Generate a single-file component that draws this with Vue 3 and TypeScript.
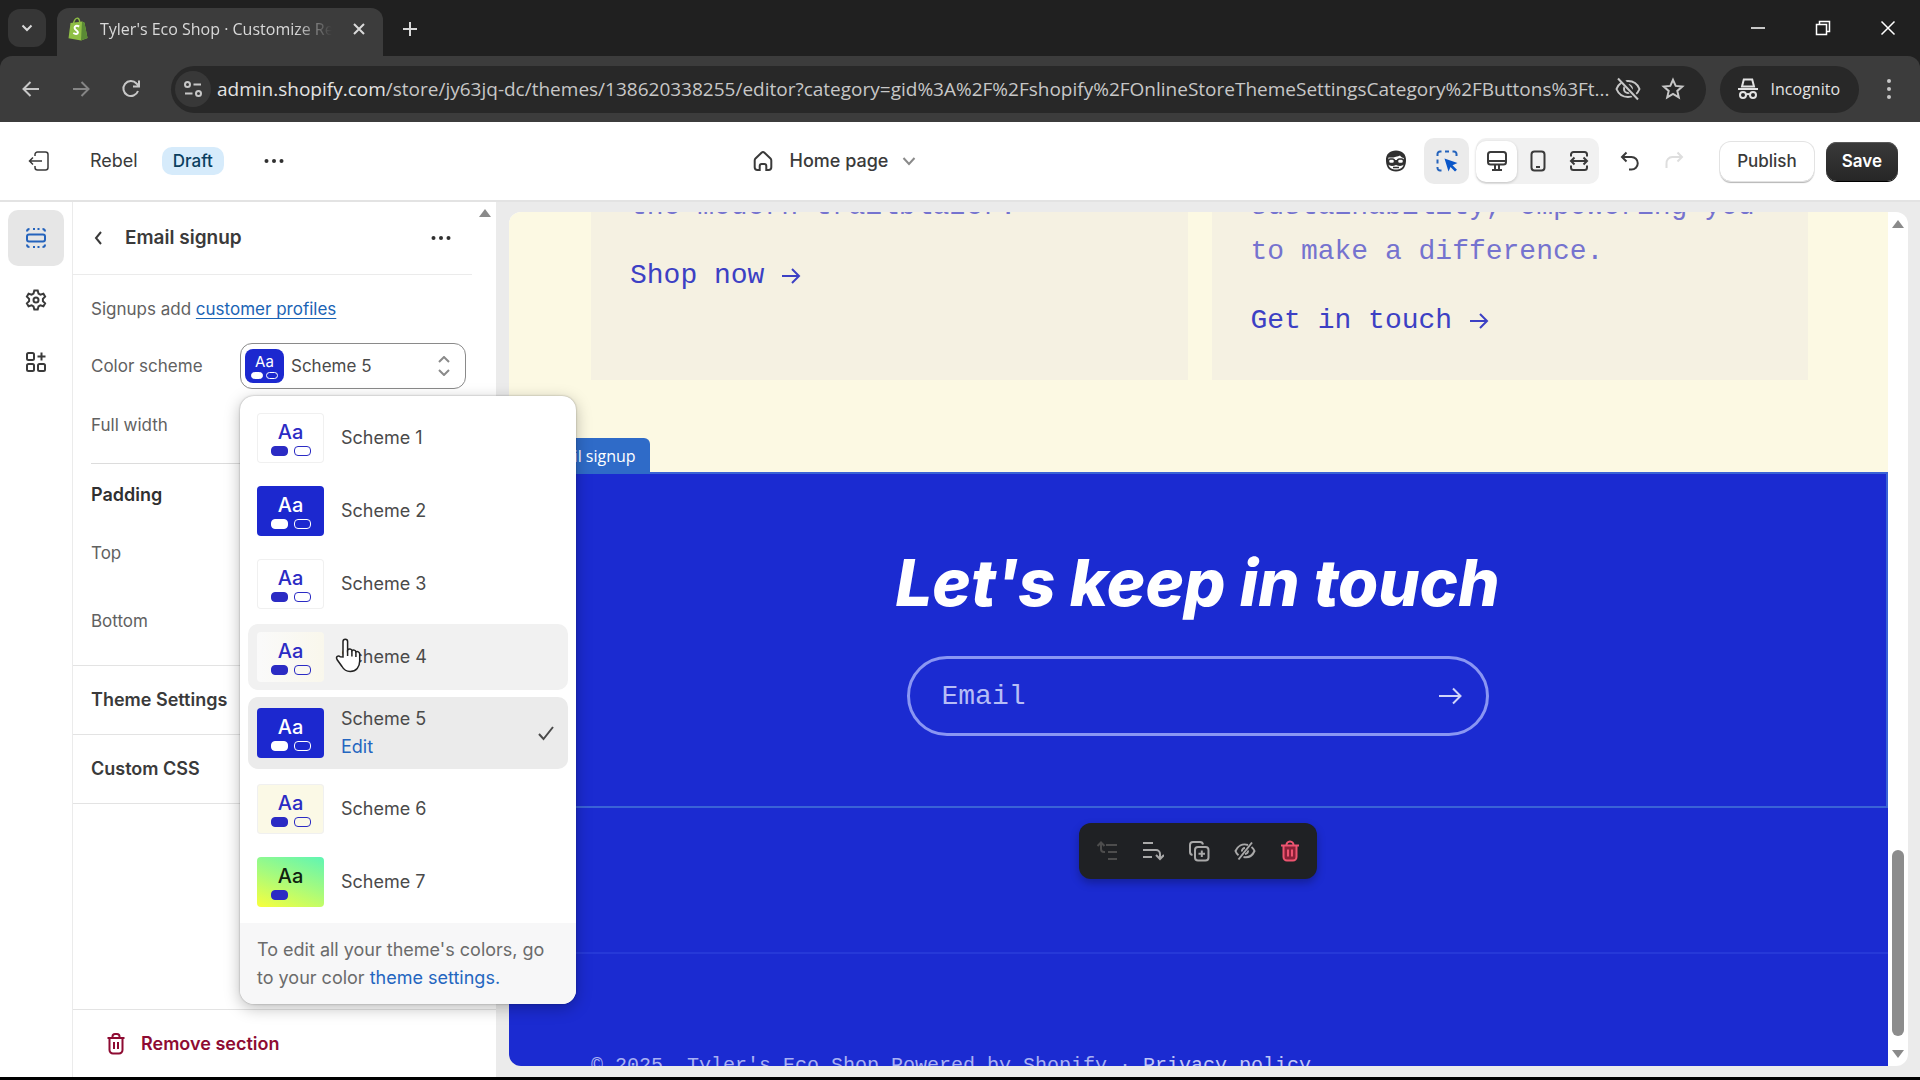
<script setup lang="ts">
import { ref } from 'vue'

interface Scheme {
  name: string
  tone: string
}

const schemes: Scheme[] = [
  { name: 'Scheme 1', tone: 'light' },
  { name: 'Scheme 2', tone: 'blue' },
  { name: 'Scheme 3', tone: 'light' },
  { name: 'Scheme 4', tone: 'ivory' },
  { name: 'Scheme 5', tone: 'blue' },
  { name: 'Scheme 6', tone: 'cream' },
  { name: 'Scheme 7', tone: 'lime' },
]

const selected = ref('Scheme 5')
const hovered = ref('Scheme 4')
const email = ref('')
</script>

<template>
  <div class="window">
    <header class="tabs">
      <button class="tab-search" aria-label="Search tabs">
        <svg width="14" height="14" viewBox="0 0 14 14"><path d="M2.500 4.500 7 9l4.500-4.500" class="ln w2" /></svg>
      </button>
      <div class="tab">
        <svg class="favicon" width="20" height="24" viewBox="0 0 20 24">
          <path d="M2.500 6 14 4.500l2.500 1.300L19.500 21 13 23.500 0.500 21.300z" fill="#8fbf45" />
          <path d="M14 4.500l2.500 1.300L19.500 21 13 23.500z" fill="#5a8a35" />
          <path d="M5.500 6.500C6 3 8 .8 9.700 1.200c1.500.4 2 2.500 2 4.500" fill="none" stroke="#8fbf45" stroke-width="1.400" />
          <path d="M11.200 9.500c-2.700-1.400-4.700-.3-4.600 1.500.1 2.200 3.400 2.300 3.300 4.400-.1 1.800-2.600 2-4.600.6" fill="none" stroke="#fff" stroke-width="2" />
        </svg>
        <span class="tab-title">Tyler's Eco Shop · Customize Rebel</span>
        <button class="tab-close" aria-label="Close tab">
          <svg width="14" height="14" viewBox="0 0 14 14"><path d="M2 2l10 10M12 2 2 12" class="ln w2" /></svg>
        </button>
      </div>
      <button class="tab-new" aria-label="New tab">
        <svg width="16" height="16" viewBox="0 0 16 16"><path d="M8 1v14M1 8h14" class="ln w2" /></svg>
      </button>
      <div class="win-controls">
        <button aria-label="Minimize"><svg width="16" height="16" viewBox="0 0 16 16"><path d="M1 8h14" class="ln" /></svg></button>
        <button aria-label="Restore"><svg width="16" height="16" viewBox="0 0 16 16"><path d="M1.500 4.500h10v10h-10zM4.500 4.500v-3h10v10h-3" class="ln" /></svg></button>
        <button aria-label="Close"><svg width="16" height="16" viewBox="0 0 16 16"><path d="M1.500 1.500l13 13M14.500 1.500l-13 13" class="ln" /></svg></button>
      </div>
    </header>

    <nav class="toolbar">
      <button class="nav-btn" aria-label="Back"><svg width="20" height="20" viewBox="0 0 20 20"><path d="M18 10H3M9.500 3 2.500 10l7 7" class="ln w2" /></svg></button>
      <button class="nav-btn dim" aria-label="Forward"><svg width="20" height="20" viewBox="0 0 20 20"><path d="M2 10h15M10.500 3l7 7-7 7" class="ln w2" /></svg></button>
      <button class="nav-btn" aria-label="Reload"><svg width="20" height="20" viewBox="0 0 20 20"><path d="M17 12a7.500 7.500 0 1 1-1.500-7.500L17.500 6.500M18 1.500v6h-6" class="ln w2" /></svg></button>
      <div class="omnibox">
        <button class="site-info" aria-label="Site information">
          <svg width="20" height="20" viewBox="0 0 20 20"><circle cx="4.500" cy="5.500" r="2.500" class="ln w2" /><path d="M10.500 5.500H18M2 14.500h7.500" class="ln w2" /><circle cx="15.500" cy="14.500" r="2.500" class="ln w2" /></svg>
        </button>
        <span class="url"><b>admin.shopify.com</b>/store/jy63jq-dc/themes/138620338255/editor?category=gid%3A%2F%2Fshopify%2FOnlineStoreThemeSettingsCategory%2FButtons%3Ft...</span>
        <button class="omni-btn" aria-label="Third-party cookies blocked">
          <svg width="26" height="24" viewBox="0 0 26 24"><path d="M1.500 12C3.500 7 8 4 13 4s9.500 3 11.500 8c-2 5-6.500 8-11.500 8S3.500 17 1.500 12z" class="ln w2" /><circle cx="13" cy="12" r="4" class="ln w2" /><path d="M5.500 1l17 21.500" stroke="#282828" stroke-width="5" /><path d="M3 1.500l20 21" class="ln w2" /></svg>
        </button>
        <button class="omni-btn" aria-label="Bookmark this tab">
          <svg width="24" height="24" viewBox="0 0 24 24"><path d="M12 2.800l2.700 6.100 6.600.6-5 4.400 1.500 6.500-5.800-3.400-5.800 3.400 1.500-6.500-5-4.400 6.600-.6z" class="ln w2" /></svg>
        </button>
      </div>
      <button class="incognito">
        <svg width="22" height="22" viewBox="0 0 22 22"><path d="M5 8.500 6.800 1.500h8.400L17 8.500zM1 11h20" class="ln w2" /><circle cx="6" cy="17" r="3" class="ln w2" /><circle cx="16" cy="17" r="3" class="ln w2" /><path d="M9 16.500q2-1 4 0" class="ln w2" /></svg>
        Incognito
      </button>
      <button class="kebab" aria-label="Chrome menu"><svg width="6" height="22" viewBox="0 0 6 22" fill="#c7c7c7"><circle cx="3" cy="3" r="2" /><circle cx="3" cy="11" r="2" /><circle cx="3" cy="19" r="2" /></svg></button>
    </nav>

    <section class="topbar">
      <div class="top-left">
        <button aria-label="Exit editor"><svg width="22" height="22" viewBox="0 0 22 22"><path d="M7 6V4.500A2.500 2.500 0 0 1 9.500 2h8A2.500 2.500 0 0 1 20 4.500v13a2.500 2.500 0 0 1-2.500 2.500h-8A2.500 2.500 0 0 1 7 17.500V16M14 11H1.500M5 7.500 1.500 11 5 14.500" class="ln" /></svg></button>
        <span class="theme-name">Rebel</span>
        <span class="badge">Draft</span>
        <button class="more" aria-label="Theme actions"><svg width="20" height="6" viewBox="0 0 20 6" fill="#303030"><circle cx="2.500" cy="3" r="2" /><circle cx="10" cy="3" r="2" /><circle cx="17.500" cy="3" r="2" /></svg></button>
      </div>
      <button class="page-picker">
        <svg width="22" height="22" viewBox="0 0 22 22"><path d="M9.500 2.700a2.200 2.200 0 0 1 3 0l6 5.800c.5.500.8 1.200.8 2v6.800a2.700 2.700 0 0 1-2.700 2.700h-2.300v-4a2 2 0 0 0-2-2h-2.600a2 2 0 0 0-2 2v4H5.400a2.700 2.700 0 0 1-2.700-2.700v-6.800c0-.8.3-1.500.8-2z" class="ln w2" /></svg>
        <span>Home page</span>
        <svg width="14" height="14" viewBox="0 0 14 14"><path d="M1.500 4l5.500 6 5.500-6" class="ln w2" stroke="#8a8a8a" /></svg>
      </button>
      <div class="top-right">
        <button class="sidekick" aria-label="Sidekick">
          <svg width="24" height="24" viewBox="0 0 24 24"><path d="M2 12C1.500 5 6 1.500 12 1.500S22.500 5 22 12c-.3 7-4 10.500-10 10.500S2.300 19 2 12z" fill="#303030" /><path d="M4.500 8.500c5 .5 9-1 11.500-2 1 1.500 2.300 2.300 3.800 2.500v2H4.300z" fill="#fff" /><path d="M4.500 15.500c1.500 2 5 1.500 7.500.5 2.500 1 6 1.500 7.500-.5-.5 3.500-3.500 5-7.500 5s-7-1.500-7.500-5z" fill="#fff" /><rect x="4.500" y="10" width="6" height="4.500" rx="2" fill="#fff" stroke="#303030" stroke-width="1.500" /><rect x="13.500" y="10" width="6" height="4.500" rx="2" fill="#fff" stroke="#303030" stroke-width="1.500" /><path d="M9 18.500h6" stroke="#303030" stroke-width="1.500" /></svg>
        </button>
        <button class="inspect" aria-label="Inspector">
          <svg width="24" height="24" viewBox="0 0 24 24"><path d="M2.500 7V5A2.500 2.500 0 0 1 5 2.500h1.500M10 2.500h4M17.500 2.500H19A2.500 2.500 0 0 1 21.500 5v2M2.500 10.500v4M2.500 18v1A2.500 2.500 0 0 0 5 21.500h1.500" class="ln w2" stroke="#2463bc" /><path d="M9.500 9.500l13 4.500-5 2.200 4.500 4.500-2 1.800-4.500-4.500-2 4.500z" fill="#0b57c9" /></svg>
        </button>
        <div class="devices">
          <button class="on" aria-label="Desktop"><svg width="22" height="22" viewBox="0 0 22 22"><rect x="2" y="2" width="18" height="12.500" rx="2.500" class="ln w2" /><path d="M2 11h18M9 15v4M13 15v4M6 20h10" class="ln w2" /></svg></button>
          <button aria-label="Mobile"><svg width="22" height="22" viewBox="0 0 22 22"><rect x="4.500" y="1.500" width="13" height="19" rx="3" class="ln w2" /><path d="M9 17h4" class="ln w2" /></svg></button>
          <button aria-label="Fullscreen"><svg width="22" height="22" viewBox="0 0 22 22"><path d="M3 6.500V4.500A2.500 2.500 0 0 1 5.500 2h11A2.500 2.500 0 0 1 19 4.500v2M3 15.500v2A2.500 2.500 0 0 0 5.500 20h11a2.500 2.500 0 0 0 2.500-2.500v-2M3 11h16M6.500 7.500 3 11l3.500 3.500M15.500 7.500 19 11l-3.500 3.500" class="ln w2" /></svg></button>
        </div>
        <div class="history">
          <button aria-label="Undo"><svg width="20" height="20" viewBox="0 0 20 20"><path d="M6.500 1.500 2 6l4.500 4.500M2 6h9.500a6 6 0 0 1 0 12.500H9" class="ln w2" /></svg></button>
          <button class="off" aria-label="Redo"><svg width="20" height="20" viewBox="0 0 20 20"><path d="M13.500 1.500 18 6l-4.500 4.500M18 6H8.500a6 6 0 0 0-6 7v4" class="ln w2" /></svg></button>
        </div>
        <button class="publish">Publish</button>
        <button class="save">Save</button>
      </div>
    </section>

    <main class="editor">
      <nav class="rail">
        <button class="on" aria-label="Sections"><svg width="22" height="22" viewBox="0 0 22 22"><rect x="2" y="7.500" width="18" height="7" rx="2" class="ln w2" /><path d="M2 4.500A2.500 2.500 0 0 1 4.500 2M8 2h2M12.500 2h2M17.500 2A2.500 2.500 0 0 1 20 4.500M2 17.500A2.500 2.500 0 0 0 4.500 20M8 20h2M12.500 20h2M17.500 20a2.500 2.500 0 0 0 2.500-2.500" class="ln w2" /></svg></button>
        <button aria-label="Theme settings"><svg width="24" height="24" viewBox="0 0 24 24"><path d="M10.300 2.500h3.400l.8 3 1.900 1.100 3-.9 1.700 2.900-2.200 2.200v2.400l2.200 2.200-1.700 2.900-3-.9-1.900 1.100-.8 3h-3.400l-.8-3-1.900-1.100-3 .9-1.700-2.900 2.200-2.200v-2.400L2.900 8.600l1.700-2.900 3 .9 1.900-1.100z" class="ln w2" /><circle cx="12" cy="12" r="2.500" class="ln w2" /></svg></button>
        <button aria-label="App embeds"><svg width="22" height="22" viewBox="0 0 22 22"><rect x="2" y="2" width="7" height="7" rx="1.500" class="ln w2" /><rect x="2" y="13" width="7" height="7" rx="1.500" class="ln w2" /><rect x="13" y="13" width="7" height="7" rx="1.500" class="ln w2" /><path d="M16.500 1.500v8M12.500 5.500h8" class="ln w2" /></svg></button>
      </nav>

      <aside class="panel">
        <svg class="panel-arrow" width="12" height="8" viewBox="0 0 12 8"><path d="M6 0l6 8H0z" fill="#8a8a8a" /></svg>
        <div class="panel-body">
          <div class="panel-head">
            <button aria-label="Back"><svg width="16" height="16" viewBox="0 0 16 16"><path d="M10 2 5 8l5 6" class="ln w2" /></svg></button>
            <h2>Email signup</h2>
            <button class="more" aria-label="Section actions"><svg width="20" height="6" viewBox="0 0 20 6" fill="#303030"><circle cx="2.500" cy="3" r="2" /><circle cx="10" cy="3" r="2" /><circle cx="17.500" cy="3" r="2" /></svg></button>
          </div>
          <div class="settings">
            <p class="hint">Signups add <a href="#">customer profiles</a></p>
            <div class="row scheme-row">
              <label for="scheme">Color scheme</label>
              <div class="select">
                <span class="swatch small blue" aria-hidden="true"><em>Aa</em><span class="pills"><i></i><i></i></span></span>
                <select id="scheme" v-model="selected">
                  <option v-for="s in schemes" :key="s.name">{{ s.name }}</option>
                </select>
                <svg class="updown" width="12" height="20" viewBox="0 0 12 20"><path d="M1 6l5-5 5 5M1 14l5 5 5-5" class="ln w2" stroke="#8a8a8a" /></svg>

                <div class="popover">
                  <ul role="listbox" aria-label="Color scheme">
                    <li
                      v-for="s in schemes"
                      :key="s.name"
                      role="option"
                      :aria-selected="s.name === selected"
                      :class="{ hover: s.name === hovered, selected: s.name === selected }"
                    >
                      <span class="swatch" :class="s.tone"><em>Aa</em><span class="pills"><i></i><i></i></span></span>
                      <span class="names">
                        <span>{{ s.name }}</span>
                        <a v-if="s.name === selected" href="#">Edit</a>
                      </span>
                      <svg v-if="s.name === selected" width="18" height="18" viewBox="0 0 18 18"><path d="M2 10l4.500 5L16 3" class="ln w2" /></svg>
                    </li>
                  </ul>
                  <p>To edit all your theme's colors, go to your color <a href="#">theme settings.</a></p>
                  <svg class="pointer" width="28" height="36" viewBox="0 0 28 36"><path d="M9 20V4.500a2.300 2.300 0 0 1 4.600 0V13c1-1.500 4-1.200 4.300.7 1.200-1.200 3.700-.7 4 1.200 1.500-.9 3.800 0 3.800 2.200V24c0 6-3.500 10.500-9.500 10.500-4.500 0-6.500-2-8.200-5L3 22.500c-1.500-2.800 1.300-4.500 3.200-2.700z" fill="#fff" stroke="#222" stroke-width="1.500" /><path d="M13.600 13v6M17.900 14v5.500M21.900 15v5" stroke="#222" stroke-width="1.500" /></svg>
                </div>
              </div>
            </div>
            <div class="row full">Full width</div>
            <hr />
            <h3>Padding</h3>
            <div class="row top">Top</div>
            <div class="row bottom">Bottom</div>
          </div>
          <button class="fold">Theme Settings</button>
          <button class="fold last">Custom CSS</button>
        </div>
        <button class="remove">
          <svg width="20" height="24" viewBox="0 0 20 24"><path d="M1.500 6h17M6.500 6V4.500A2.500 2.500 0 0 1 9 2h2a2.500 2.500 0 0 1 2.500 2.500V6M3.500 6v12A3.500 3.500 0 0 0 7 21.500h6a3.500 3.500 0 0 0 3.500-3.500V6M8 10v7M12 10v7" class="ln w2" /></svg>
          Remove section
        </button>
      </aside>

      <div class="stage">
        <div class="preview">
          <div class="page">
            <div class="cards">
              <article>
                <p>the modern trailblazer.</p>
                <a href="#">Shop now <svg width="20" height="20" viewBox="0 0 20 20"><path d="M1 10h17M11 3l7 7-7 7" class="ln w2" /></svg></a>
              </article>
              <article>
                <p>sustainability, empowering you to make a difference.</p>
                <a href="#">Get in touch <svg width="20" height="20" viewBox="0 0 20 20"><path d="M1 10h17M11 3l7 7-7 7" class="ln w2" /></svg></a>
              </article>
            </div>
            <section class="signup">
              <span class="tag">Email signup</span>
              <h1>Let's keep in touch</h1>
              <form @submit.prevent>
                <input v-model="email" type="email" placeholder="Email" aria-label="Email" />
                <button aria-label="Subscribe"><svg width="24" height="20" viewBox="0 0 24 20"><path d="M1 10h21M15 2.500l7.500 7.500-7.500 7.500" class="ln w2" /></svg></button>
              </form>
              <div class="actions" role="toolbar" aria-label="Section actions">
                <button class="off" aria-label="Move up"><svg width="22" height="22" viewBox="0 0 22 22"><path d="M10 5h11M12 12h9M12 19h9M5 3v6a3 3 0 0 0 3 3h1M1.500 6 5 2.500 8.500 6" class="ln w2" /></svg></button>
                <button aria-label="Move down"><svg width="22" height="22" viewBox="0 0 22 22"><path d="M1 3h10M1 10h13a4 4 0 0 1 4 4v4M1 17h9M14 15l4 4 4-4" class="ln w2" /></svg></button>
                <button aria-label="Duplicate"><svg width="22" height="22" viewBox="0 0 22 22"><rect x="7" y="7" width="13.500" height="13.500" rx="3" class="ln w2" /><path d="M4.500 15A3 3 0 0 1 2 12V5a3 3 0 0 1 3-3h7a3 3 0 0 1 3 2.500M13.800 10.500v6.500M10.500 13.800h6.500" class="ln w2" /></svg></button>
                <button aria-label="Hide"><svg width="22" height="22" viewBox="0 0 22 22"><path d="M18 2.500 4.500 19.500M14 5C8 3 3.500 6.500 1.500 11c.5 1.500 1.500 3 3 4.200M17.500 7c1.500 1 2.400 2.400 3 4-2 4.500-6 7-11 6M8 11.500A3 3 0 0 1 11 8M14 10.500a3 3 0 0 1-3 3.500" class="ln w2" /></svg></button>
                <button class="danger" aria-label="Remove"><svg width="20" height="22" viewBox="0 0 20 22"><path d="M3.500 6h13v11a3.500 3.500 0 0 1-3.500 3.500H7A3.500 3.500 0 0 1 3.500 17z" fill="#8a2037" /><path d="M1 5.500h18M6.500 5.500A3.500 3.500 0 0 1 10 1.500a3.500 3.500 0 0 1 3.500 4M3.500 6v11A3.500 3.500 0 0 0 7 20.500h6a3.500 3.500 0 0 0 3.500-3.500V6M8 9.500v7M12 9.500v7" class="ln w2" /></svg></button>
              </div>
            </section>
            <div class="banner"></div>
            <footer>© 2025, Tyler's Eco Shop Powered by Shopify · <a href="#">Privacy policy</a></footer>
          </div>
          <div class="scrollbar" aria-hidden="true">
            <svg width="12" height="8" viewBox="0 0 12 8"><path d="M6 0l6 8H0z" fill="#8a8a8a" /></svg>
            <div class="track"><div class="thumb"></div></div>
            <svg width="12" height="8" viewBox="0 0 12 8"><path d="M6 8l6-8H0z" fill="#8a8a8a" /></svg>
          </div>
        </div>
      </div>
    </main>
  </div>
</template>

<style>
body {
  margin: 0;
}
</style>

<style scoped>
* {
  box-sizing: border-box;
}

.window {
  display: flex;
  flex-direction: column;
  height: 100vh;
  overflow: hidden;
  border-bottom: 3px solid #000;
  background: #202020;
  color: #3a3a3a;
  font: 17px/24px Inter, "Liberation Sans", sans-serif;
}

button {
  display: flex;
  align-items: center;
  justify-content: center;
  flex: none;
  padding: 0;
  border: 0;
  background: none;
  color: inherit;
  font: inherit;
}

svg {
  flex: none;
  display: block;
}

.ln {
  fill: none;
  stroke-width: 1.500;
}

.ln:not([stroke]) {
  stroke: currentColor;
}

.w2 {
  stroke-width: 2;
}

h1, h2, h3, p, ul {
  margin: 0;
  padding: 0;
}

/* Browser chrome */
.tabs {
  display: flex;
  align-items: flex-end;
  height: 56px;
  padding-left: 8px;
  color: #d9d9d9;
  font: 16px/24px "Open Sans", "Noto Sans", sans-serif;
}

.tab-search {
  width: 38px;
  height: 38px;
  margin-bottom: 9px;
  border-radius: 12px;
  background: #363636;
}

.tab {
  display: flex;
  align-items: center;
  width: 326px;
  height: 48px;
  margin-left: 11px;
  padding: 0 17px 6px 11px;
  border-radius: 12px 12px 0 0;
  background: #3c3c3c;
}

.tab-title {
  flex: 1;
  margin-left: 12px;
  overflow: hidden;
  white-space: nowrap;
  -webkit-mask-image: linear-gradient(90deg, #000 84%, transparent);
  mask-image: linear-gradient(90deg, #000 84%, transparent);
}

.tab-close {
  margin-left: 20px;
}

.tab-new {
  height: 54px;
  margin-left: 19px;
}

.win-controls {
  display: flex;
  gap: 49px;
  height: 56px;
  margin-left: auto;
  padding-right: 24px;
  color: #fff;
}

.toolbar {
  display: flex;
  align-items: center;
  height: 66px;
  padding: 0 28px 0 21px;
  border-radius: 12px 12px 0 0;
  background: #3c3c3c;
  color: #c7c7c7;
  font: 16px/24px "Open Sans", "Noto Sans", sans-serif;
}

.nav-btn {
  margin-right: 30px;
}

.dim {
  color: #858585;
}

.omnibox {
  display: flex;
  align-items: center;
  flex: 1;
  min-width: 0;
  height: 47px;
  margin-right: 14px;
  padding: 0 21px 0 4px;
  border-radius: 24px;
  background: #282828;
}

.site-info {
  width: 36px;
  height: 36px;
  border-radius: 50%;
  background: #383838;
}

.url {
  flex: 1;
  min-width: 0;
  margin-left: 6px;
  overflow: hidden;
  white-space: nowrap;
  font-size: 19px;
}

.url b {
  color: #e3e3e3;
  font-weight: 400;
}

.omni-btn + .omni-btn {
  margin-left: 20px;
}

.incognito {
  gap: 12px;
  height: 47px;
  padding: 0 19px 0 17px;
  border-radius: 24px;
  background: #282828;
  color: #e3e3e3;
}

.kebab {
  margin-left: 27px;
}

/* Editor top bar */
.topbar {
  display: flex;
  align-items: center;
  justify-content: space-between;
  height: 80px;
  padding: 0 22px 0 28px;
  border-bottom: 2px solid #e3e3e3;
  background: #fff;
}

.top-left,
.top-right,
.page-picker {
  display: flex;
  align-items: center;
}

.theme-name {
  margin-left: 40px;
  font-size: 18px;
}

.badge {
  margin-left: 24px;
  padding: 2px 11px;
  border-radius: 10px;
  background: #d6ebfb;
  color: #0a3f5f;
  font-weight: 500;
}

.top-left .more {
  margin-left: 40px;
}

.page-picker {
  font-size: 18px;
  font-weight: 500;
}

.page-picker span {
  margin: 0 14px 0 16px;
}

.inspect {
  width: 45px;
  height: 46px;
  margin-left: 16px;
  border-radius: 10px;
  background: #ebebeb;
}

.devices {
  display: flex;
  align-items: center;
  height: 46px;
  margin-left: 7px;
  border-radius: 10px;
  background: #f1f1f1;
}

.devices button {
  width: 41px;
  height: 41px;
}

.devices .on {
  border-radius: 10px;
  background: #fff;
  box-shadow: 0 1px 3px #0003;
}

.history {
  display: flex;
  gap: 24px;
  margin: 0 36px 0 21px;
}

.history .off {
  color: #dedede;
}

.publish,
.save {
  height: 39px;
  border-radius: 11px;
  font-weight: 500;
}

.publish {
  padding: 0 17px;
  box-shadow: 0 0 0 1px #e3e3e3, 0 2px 1px #b5b5b5;
}

.save {
  margin-left: 12px;
  padding: 0 16px;
  background: linear-gradient(#3a3a3a, #262626);
  box-shadow: 0 1px 0 #000, inset 0 1px 0 #5a5a5a;
  color: #fff;
  font-weight: 600;
}

/* Left rail and settings panel */
.editor {
  display: flex;
  flex: 1;
  min-height: 0;
  background: #ebebeb;
}

.rail {
  display: flex;
  flex-direction: column;
  align-items: center;
  gap: 6px;
  width: 73px;
  padding-top: 8px;
  border-right: 1px solid #ebebeb;
  background: #fff;
}

.rail button {
  width: 56px;
  height: 56px;
  border-radius: 10px;
}

.rail .on {
  background: #e6e6e6;
  color: #2463bc;
}

.panel {
  position: relative;
  z-index: 2;
  display: flex;
  flex-direction: column;
  width: 423px;
  background: #fff;
}

.panel-arrow {
  position: absolute;
  top: 7px;
  right: 5px;
}

.panel-body {
  flex: 1;
  min-height: 0;
}

.panel-head {
  display: flex;
  align-items: center;
  height: 73px;
  margin-right: 24px;
  padding: 0 21px 0 18px;
  border-bottom: 1px solid #ebebeb;
}

.panel-head h2 {
  margin-left: 18px;
  font-size: 19px;
  font-weight: 600;
}

.panel-head .more {
  margin-left: auto;
}

.settings {
  padding: 22px 30px 22px 18px;
  border-bottom: 1px solid #e3e3e3;
  color: #616161;
}

.hint a {
  color: #1b64b5;
  text-underline-offset: 3px;
}

.row {
  display: flex;
  align-items: center;
  justify-content: space-between;
  height: 44px;
}

.scheme-row {
  height: 46px;
  margin-top: 22px;
}

.full {
  margin: 14px 0 16px;
}

hr {
  height: 1px;
  margin: 0;
  border: 0;
  background: #dcdcdc;
}

h3 {
  margin: 19px 0 24px;
  color: #303030;
  font-size: 18px;
  font-weight: 600;
}

.bottom {
  margin-top: 24px;
}

.fold {
  justify-content: flex-start;
  width: 100%;
  height: 69px;
  padding-left: 18px;
  border-bottom: 1px solid #e3e3e3;
  font-size: 18px;
  font-weight: 600;
}

.remove {
  justify-content: flex-start;
  gap: 15px;
  height: 68px;
  padding-left: 33px;
  border-top: 1px solid #e3e3e3;
  color: #8e0b32;
  font-size: 18px;
  font-weight: 600;
}

.select {
  position: relative;
  display: flex;
  align-items: center;
  width: 226px;
  height: 46px;
  padding: 0 15px 0 4px;
  border: 1px solid #8a8a8a;
  border-radius: 12px;
}

.select select {
  flex: 1;
  min-width: 0;
  height: 40px;
  padding: 0 0 0 7px;
  border: 0;
  outline: 0;
  appearance: none;
  background: none;
  color: #4a4a4a;
  font: inherit;
}

.swatch {
  display: flex;
  flex: none;
  flex-direction: column;
  align-items: center;
  justify-content: center;
  gap: 2px;
  width: 67px;
  height: 50px;
  border-radius: 4px;
  color: #2b2bc4;
  box-shadow: inset 0 0 0 1px #f0f0f0;
  background: #fff;
}

.swatch em {
  font: 500 20px/24px Inter, sans-serif;
}

.pills {
  display: flex;
  gap: 6px;
}

.pills i {
  width: 17px;
  height: 10px;
  border: 1px solid currentColor;
  border-radius: 4px;
}

.pills i:first-child {
  background: currentColor;
}

.swatch.blue {
  background: #1c28cf;
  color: #fff;
  box-shadow: none;
}

.swatch.ivory {
  background: linear-gradient(90deg, #fafafa, #f9f7ec);
  box-shadow: none;
}

.swatch.cream {
  background: #fbf9e6;
}

.swatch.lime {
  background: linear-gradient(200deg, #5ff5b4, #a8fb7c 50%, #f8ff3c);
  box-shadow: none;
}

.lime em {
  color: #10230f;
}

.lime i:last-child {
  visibility: hidden;
}

.swatch.small {
  gap: 1px;
  width: 39px;
  height: 34px;
  border-radius: 8px;
}

.small em {
  font-size: 15px;
  font-weight: 400;
  line-height: 18px;
}

.small .pills {
  gap: 3px;
}

.small .pills i {
  width: 12px;
  height: 7px;
}

.popover {
  position: absolute;
  top: 52px;
  left: -1px;
  width: 336px;
  border-radius: 14px;
  background: #fff;
  box-shadow: 0 4px 16px #0004, 0 0 2px #0005;
  color: #4a4a4a;
  font-size: 18px;
  line-height: 28px;
}

.popover a {
  color: #2466c0;
  text-decoration: none;
}

.popover ul {
  display: flex;
  flex-direction: column;
  gap: 7px;
  padding: 9px 8px 8px;
  list-style: none;
}

.popover li {
  display: flex;
  align-items: center;
  gap: 17px;
  height: 66px;
  padding: 0 13px 0 9px;
  border-radius: 10px;
}

.popover li.hover {
  background: #f1f1f1;
}

.popover li.selected {
  height: 72px;
  background: #ebebeb;
}

.names {
  display: flex;
  flex: 1;
  flex-direction: column;
}

.popover p {
  padding: 13px 20px 12px 17px;
  border-radius: 0 0 14px 14px;
  background: #f7f7f8;
  color: #6b6b6b;
}

.pointer {
  position: absolute;
  top: 241px;
  left: 94px;
}

/* Storefront preview */
.stage {
  flex: 1;
  min-width: 0;
  padding: 10px 12px 11px 13px;
}

.preview {
  display: flex;
  height: 100%;
  overflow: hidden;
  border-radius: 12px;
  background: #fff;
}

.page {
  flex: 1;
  min-width: 0;
  background: #fcf9e3;
  font: 28px/45px "Liberation Mono", monospace;
}

.cards {
  display: flex;
  gap: 24px;
  margin-top: -28px;
  padding: 0 80px 92px 82px;
}

.cards article {
  flex: 1;
  min-width: 0;
  padding: 0 39px 37px;
  background: #f5f1e2;
}

.cards p {
  margin-bottom: 24px;
  color: #7573cf;
}

.cards a {
  display: flex;
  align-items: center;
  gap: 17px;
  color: #3c40c4;
  text-decoration: none;
}

.signup {
  position: relative;
  padding: 71px 0 70px;
  border: 2px solid #3a63d6;
  border-left: 0;
  background: #1b2bd1;
  color: #fff;
}

.tag {
  position: absolute;
  bottom: 100%;
  left: 0;
  padding: 6px 14px 6px 32px;
  border-radius: 0 6px 0 0;
  background: #2f6bc8;
  font: 16px/24px "Open Sans", "Noto Sans", sans-serif;
}

.signup h1 {
  text-align: center;
  font: italic 800 65px/76px Inter, sans-serif;
}

.signup form {
  display: flex;
  align-items: center;
  width: 582px;
  height: 80px;
  margin: 35px auto 0;
  padding: 0 24px 0 32px;
  border: 3px solid #8a96f3;
  border-radius: 40px;
}

.signup input {
  flex: 1;
  min-width: 0;
  padding: 0;
  border: 0;
  outline: 0;
  background: none;
  color: #fff;
  font: inherit;
}

.signup input::placeholder {
  color: #b6bdf6;
  opacity: 1;
}

.signup form button {
  color: #d0d4fa;
}

.actions {
  position: absolute;
  top: calc(100% + 17px);
  left: 50%;
  display: flex;
  align-items: center;
  gap: 24px;
  height: 56px;
  padding: 0 17px;
  border-radius: 12px;
  transform: translateX(-50%);
  background: #1f2124;
  box-shadow: 0 4px 8px #0004;
  color: #a9a9a9;
}

.actions .off {
  color: #4d4d4d;
}

.actions .danger {
  color: #ee5470;
}

.banner {
  height: 146px;
  border-bottom: 2px solid #2639d8;
  background: #1b2bd1;
}

footer {
  height: 200px;
  padding: 97px 0 0 82px;
  background: #1b2bd1;
  color: #a9b1f3;
  font-size: 20px;
  line-height: 30px;
  white-space: nowrap;
}

footer a {
  color: #c0c6f6;
  text-decoration: none;
}

.scrollbar {
  display: flex;
  flex-direction: column;
  align-items: center;
  width: 20px;
  padding: 8px 0;
}

.track {
  display: flex;
  flex: 1;
  flex-direction: column;
  justify-content: flex-end;
  padding-bottom: 14px;
}

.thumb {
  width: 12px;
  height: 23%;
  border-radius: 6px;
  background: #8c8c8c;
}
</style>
